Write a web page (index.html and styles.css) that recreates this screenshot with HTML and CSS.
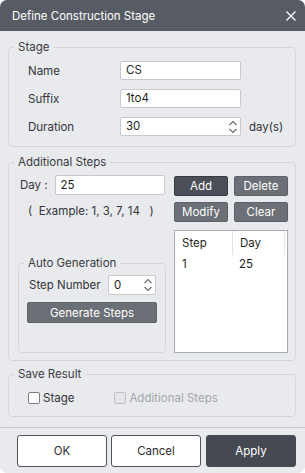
FILE: index.html
```html
<!DOCTYPE html>
<html>
    <head>
        <meta charset="utf-8">
        <link rel="stylesheet" href="styles.css">
    </head>
    <body>
        <div class="dialog">
            <div class="titlebar">
                <span>Define Construction Stage</span>
                <svg class="close" width="12" height="12" viewBox="0 0 12 12">
                    <path d="M1.5 1.5 L10.5 10.5 M10.5 1.5 L1.5 10.5" stroke="#fff" stroke-width="1.3"/>
                </svg>
            </div>

            <div class="content">
                <fieldset class="group stage">
                    <legend>Stage</legend>
                    <div class="form-grid">
                        <label>Name</label>
                        <div class="input">CS</div>
                        <span></span>

                        <label>Suffix</label>
                        <div class="input">1to4</div>
                        <span></span>

                        <label>Duration</label>
                        <div class="input spin">30
                            <svg class="arrows" width="10" height="16" viewBox="0 0 10 16">
                                <path d="M1.5 6 L5 2.5 L8.5 6 M1.5 10 L5 13.5 L8.5 10" fill="none" stroke="#6a6e74" stroke-width="1.2"/>
                            </svg>
                        </div>
                        <span class="unit">day(s)</span>
                    </div>
                </fieldset>

                <fieldset class="group steps">
                    <legend>Additional Steps</legend>
                    <div class="steps-grid">
                        <div class="left-col">
                            <div class="day-row">
                                <label>Day :</label>
                                <div class="input day">25</div>
                            </div>
                            <div class="example">( &nbsp;Example: 1, 3, 7, 14 &nbsp;&nbsp;)</div>

                            <fieldset class="group auto">
                                <legend>Auto Generation</legend>
                                <div class="step-row">
                                    <label>Step Number</label>
                                    <div class="input spin small">0
                                        <svg class="arrows" width="10" height="16" viewBox="0 0 10 16">
                                            <path d="M1.5 6 L5 2.5 L8.5 6 M1.5 10 L5 13.5 L8.5 10" fill="none" stroke="#6a6e74" stroke-width="1.2"/>
                                        </svg>
                                    </div>
                                </div>
                                <button class="btn gray wide">Generate Steps</button>
                            </fieldset>
                        </div>

                        <div class="right-col">
                            <div class="btn-grid">
                                <button class="btn dark">Add</button>
                                <button class="btn gray">Delete</button>
                                <button class="btn gray">Modify</button>
                                <button class="btn gray">Clear</button>
                            </div>
                            <div class="list">
                                <div class="list-head">
                                    <div class="cell first">Step</div>
                                    <div class="cell">Day</div>
                                </div>
                                <div class="list-row">
                                    <div class="cell first">1</div>
                                    <div class="cell">25</div>
                                </div>
                            </div>
                        </div>
                    </div>
                </fieldset>

                <fieldset class="group save">
                    <legend>Save Result</legend>
                    <div class="checks">
                        <label class="check"><span class="box"></span>Stage</label>
                        <label class="check disabled"><span class="box"></span>Additional Steps</label>
                    </div>
                </fieldset>
            </div>

            <div class="footer">
                <button class="btn-foot">OK</button>
                <button class="btn-foot">Cancel</button>
                <button class="btn-foot apply">Apply</button>
            </div>
        </div>
    </body>
</html>
```

FILE: styles.css
```css
body{
    margin: 0;
    padding: 0;
    background: #ffffff;
    font-family: Inter, "Noto Sans", sans-serif;
    font-size: 11.5px;
    color: #333438;
}
.dialog{
    width: 305px;
    height: 473px;
    background: #e9eaee;
    border-radius: 7px;
    overflow: hidden;
    display: flex;
    flex-direction: column;
}
.titlebar{
    height: 31px;
    flex: none;
    background: #575c64;
    color: #ffffff;
    font-size: 11.5px;
    padding: 0 8px 0 12px;
    display: flex;
    align-items: center;
    justify-content: space-between;
}
.content{
    padding: 9px 9px 0 8px;
}

/* group boxes: legend sits 5px in from the border */
.group{
    margin: 0;
    border: 1px solid #d3d5d9;
    border-radius: 4px;
    padding: 0;
    min-width: 0;
}
.group legend{
    padding: 0 4px;
    line-height: 14px;
    color: #3a3b3f;
}
.stage{
    padding: 7px 0 10px 19px;
}
.stage legend{
    margin-left: -14px;
}
.form-grid{
    display: grid;
    grid-template-columns: 92px 121px auto;
    row-gap: 9px;
    align-items: center;
}
.unit{
    margin-left: 8px;
}
.input{
    position: relative;
    height: 19px;
    box-sizing: border-box;
    background: #ffffff;
    border: 1px solid #c7c9cd;
    border-radius: 2px;
    padding: 0 5px;
    line-height: 17px;
    color: #1e1f22;
}
.arrows{
    position: absolute;
    right: 2px;
    top: 1px;
}

.steps{
    margin-top: 8px;
    padding: 6px 8px 7px 9px;
}
.steps legend{
    margin-left: -4px;
}
.steps-grid{
    display: grid;
    grid-template-columns: 148px 114px;
    column-gap: 8px;
}
.left-col{
    display: flex;
    flex-direction: column;
}
.day-row{
    display: flex;
    align-items: center;
    gap: 7px;
    padding-left: 2px;
    white-space: nowrap;
}
.input.day{
    flex: none;
    width: 110px;
    height: 20px;
    line-height: 18px;
}
.example{
    margin-top: 9px;
    padding-left: 10px;
}
.auto{
    margin-top: auto;
    padding: 5px 8px 0 8px;
    height: 97px;
    box-sizing: border-box;
}
.auto legend{
    margin-left: -3px;
}
.step-row{
    display: flex;
    align-items: center;
    justify-content: space-between;
    padding-left: 2px;
}
.input.small{
    width: 48px;
    height: 20px;
    line-height: 18px;
    margin-right: 1px;
}
.btn{
    font-family: inherit;
    font-size: 11.5px;
    color: #ffffff;
    border: 1px solid #5e6269;
    border-radius: 2px;
    height: 20px;
    padding: 0;
    background: #6b6f76;
}
.btn.dark{
    background: #4b5058;
    border-color: #383c42;
}
.btn.wide{
    width: 100%;
    margin-top: 7px;
    height: 21px;
}
.right-col{
    display: flex;
    flex-direction: column;
    padding-top: 1px;
}
.btn-grid{
    display: grid;
    grid-template-columns: 54px 54px;
    column-gap: 6px;
    row-gap: 6px;
}
.list{
    margin-top: 8px;
    height: 123px;
    box-sizing: border-box;
    background: #ffffff;
    border: 1px solid #a9acb1;
}
.list-head, .list-row{
    display: flex;
}
.list-head{
    height: 24px;
    align-items: center;
}
.list-row{
    height: 18px;
    align-items: center;
}
.cell{
    padding-left: 7px;
    flex: 1;
    height: 100%;
    display: flex;
    align-items: center;
    color: #1e1f22;
}
.cell.first{
    flex: none;
    width: 50px;
}
.list-head .cell.first{
    border-right: 1px solid #e1e2e5;
}
.list-head .cell:last-child{
    border-right: 1px solid #e1e2e5;
    margin-right: 2px;
}

.save{
    margin-top: 6px;
    padding: 10px 0 11px 19px;
}
.save legend{
    margin-left: -14px;
}
.checks{
    display: flex;
    gap: 40px;
}
.check{
    display: flex;
    align-items: center;
    gap: 3px;
}
.box{
    width: 10px;
    height: 10px;
    background: #ffffff;
    border: 1px solid #7b7f85;
    border-radius: 2px;
}
.check.disabled{
    color: #a3a6ab;
}
.check.disabled .box{
    background: #e4e5e8;
    border-color: #bfc1c5;
}

.footer{
    margin-top: 10px;
    border-top: 1px solid #c9cbcf;
    padding: 7px 9px 0 17px;
    display: flex;
    gap: 4px;
}
.btn-foot{
    width: 91px;
    height: 32px;
    font-family: inherit;
    font-size: 11.5px;
    color: #2c2d31;
    background: #ffffff;
    border: 1px solid #4f535a;
    border-radius: 3px;
}
.btn-foot.apply{
    margin-left: 1px;
    background: #454a52;
    border-color: #454a52;
    color: #ffffff;
}
```
